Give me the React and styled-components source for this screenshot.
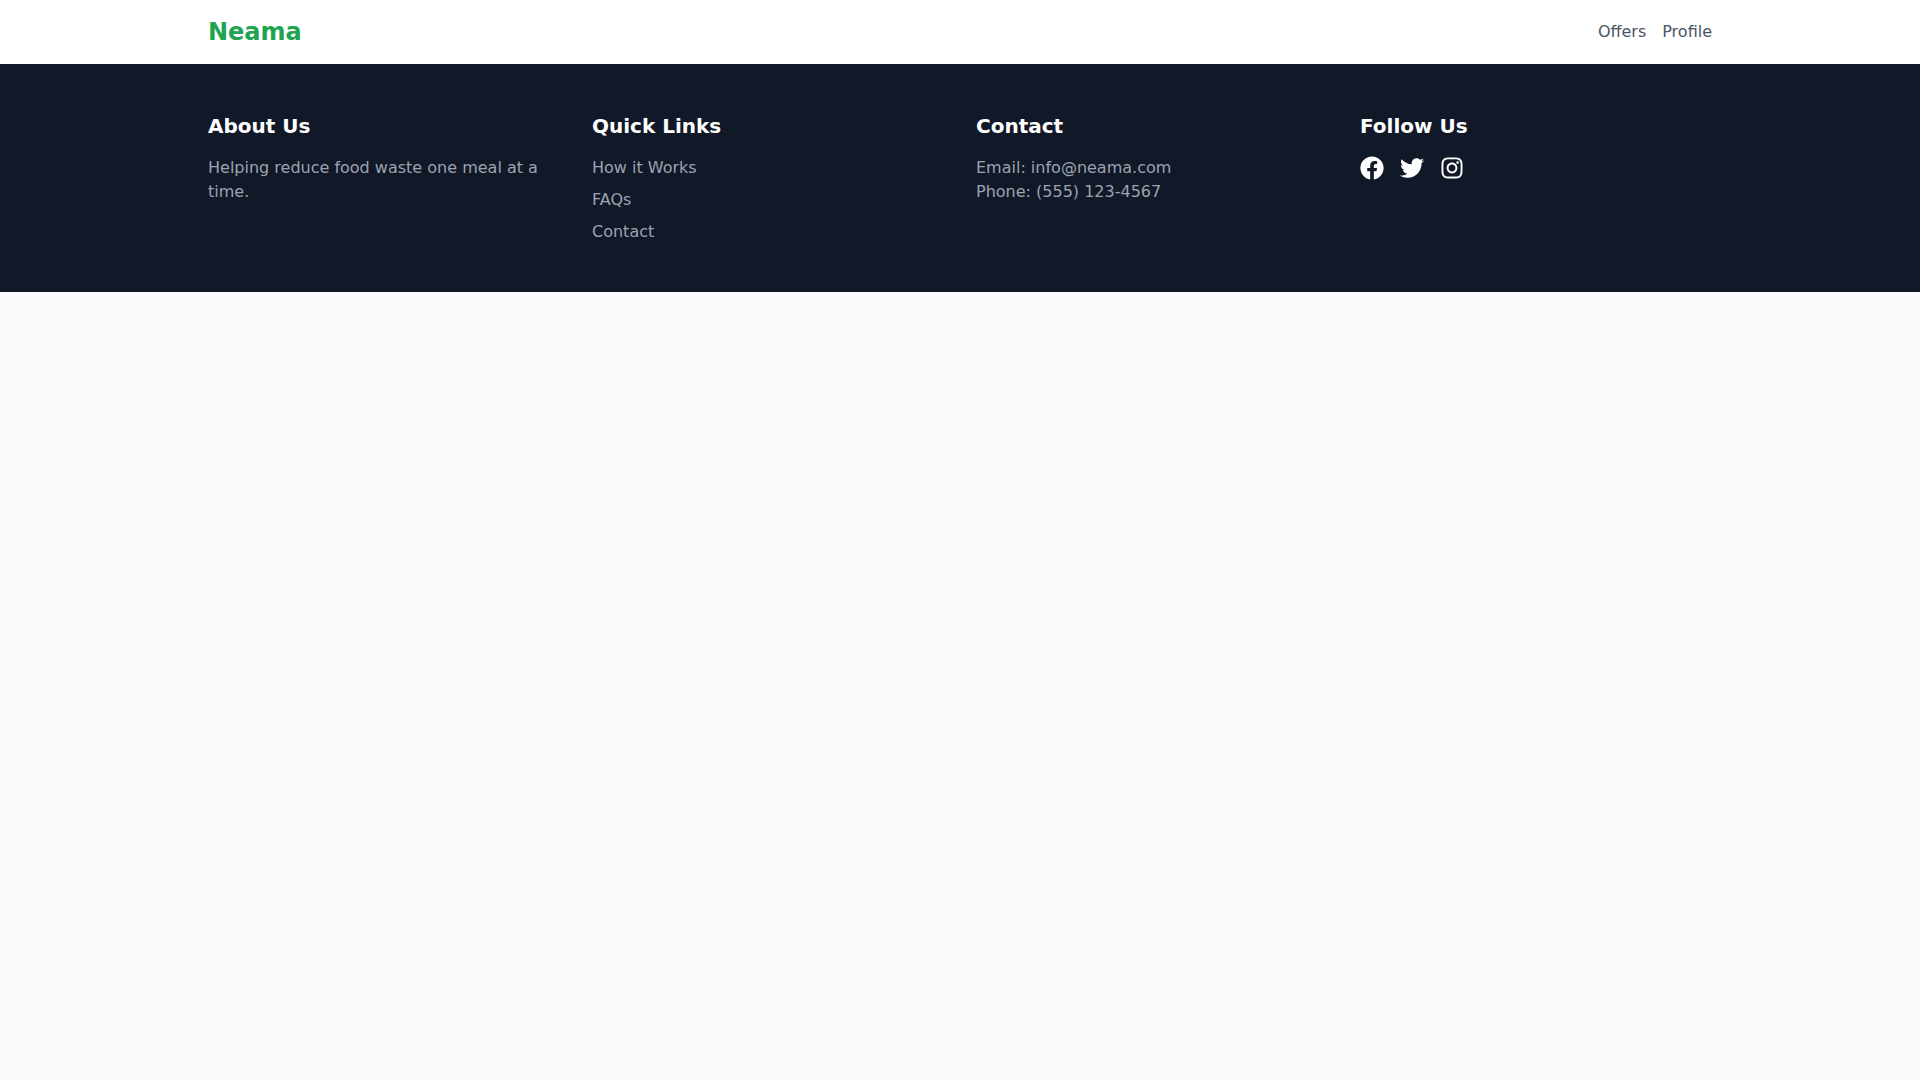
import React from 'react'
import styled, { createGlobalStyle } from 'styled-components'
import { FaFacebook, FaTwitter, FaInstagram } from 'react-icons/fa'

const colors = {
  white: '#ffffff',
  page: '#f9fafb',
  dark: '#111827',
  muted: '#9ca3af',
  text: '#4b5563',
  green: '#20a452'
}

const GlobalStyle = createGlobalStyle`
  *, *::before, *::after {
    box-sizing: border-box;
  }
  body {
    margin: 0;
    background: ${colors.page};
    font-family: 'DejaVu Sans', sans-serif;
    font-size: 16px;
    line-height: 24px;
  }
  a {
    color: inherit;
    text-decoration: none;
  }
`

const Container = styled.div`
  width: 100%;
  max-width: 1536px;
  margin: 0 auto;
  padding: 0 16px;
`

const Header = styled.header`
  background: ${colors.white};
`

const HeaderRow = styled(Container)`
  display: flex;
  align-items: center;
  justify-content: space-between;
  padding: 16px;
`

const Brand = styled.a`
  color: ${colors.green};
  font-size: 24px;
  font-weight: 700;
  line-height: 32px;
`

const Nav = styled.nav`
  display: flex;
  gap: 16px;
  color: ${colors.text};
`

const Footer = styled.footer`
  padding: 48px 0;
  background: ${colors.dark};
  color: ${colors.white};
`

const Columns = styled(Container)`
  display: grid;
  grid-template-columns: repeat(4, minmax(0, 1fr));
  gap: 32px;
  @media (max-width: 767px) {
    grid-template-columns: minmax(0, 1fr);
  }
`

const ColumnTitle = styled.h3`
  margin: 0 0 16px;
  font-size: 20px;
  font-weight: 600;
  line-height: 28px;
`

const Text = styled.p`
  margin: 0;
  color: ${colors.muted};
`

const LinkList = styled.ul`
  display: flex;
  flex-direction: column;
  gap: 8px;
  margin: 0;
  padding: 0;
  list-style: none;
  color: ${colors.muted};
`

const SocialLinks = styled.div`
  display: flex;
  gap: 16px;
`

const SocialLink = styled.a`
  display: block;
  svg {
    display: block;
    width: 24px;
    height: 24px;
  }
`

const navLinks = ['Offers', 'Profile']
const quickLinks = ['How it Works', 'FAQs', 'Contact']
const socials = [
  { name: 'Facebook', Icon: FaFacebook },
  { name: 'Twitter', Icon: FaTwitter },
  { name: 'Instagram', Icon: FaInstagram }
]

const Column = ({ title, children }) => (
  <section>
    <ColumnTitle>{title}</ColumnTitle>
    {children}
  </section>
)

const App = () => (
  <>
    <GlobalStyle />
    <Header>
      <HeaderRow>
        <Brand href='#'>Neama</Brand>
        <Nav>
          {navLinks.map(label => <a key={label} href='#'>{label}</a>)}
        </Nav>
      </HeaderRow>
    </Header>
    <Footer>
      <Columns>
        <Column title='About Us'>
          <Text>Helping reduce food waste one meal at a time.</Text>
        </Column>
        <Column title='Quick Links'>
          <LinkList>
            {quickLinks.map(label => <li key={label}><a href='#'>{label}</a></li>)}
          </LinkList>
        </Column>
        <Column title='Contact'>
          <Text>Email: info@neama.com</Text>
          <Text>Phone: (555) 123-4567</Text>
        </Column>
        <Column title='Follow Us'>
          <SocialLinks>
            {socials.map(({ name, Icon }) => (
              <SocialLink key={name} href='#' aria-label={name}><Icon /></SocialLink>
            ))}
          </SocialLinks>
        </Column>
      </Columns>
    </Footer>
  </>
)

export default App
